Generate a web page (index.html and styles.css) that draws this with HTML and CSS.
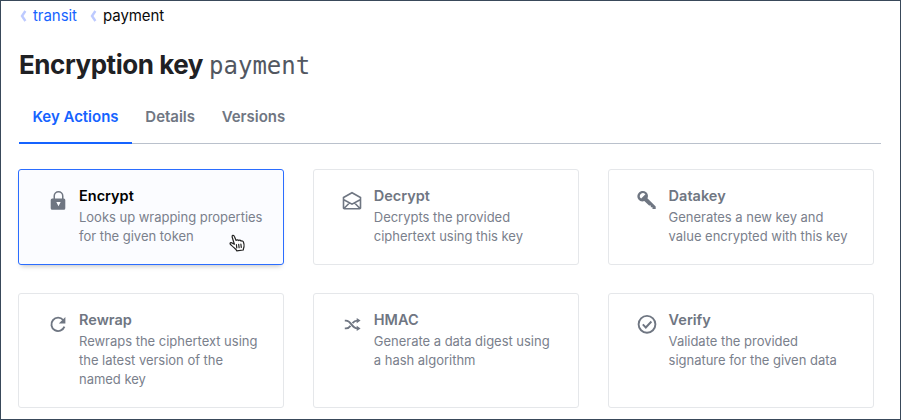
FILE: index.html
```html
<!DOCTYPE html>
<html lang="en">
<head>
<meta charset="utf-8">
<title>Encryption key payment</title>
<link rel="stylesheet" href="styles.css">
</head>
<body>
<main class="page">
  <nav class="breadcrumb">
    <svg class="chevron" viewBox="0 0 8 12"><path d="M6.400 1 3 6l3.400 5"/></svg>
    <a class="crumb-link">transit</a>
    <svg class="chevron" viewBox="0 0 8 12"><path d="M6.400 1 3 6l3.400 5"/></svg>
    <span class="crumb-current">payment</span>
  </nav>
  <h1 class="title"><span>Encryption key</span><code class="key-name">payment</code></h1>
  <nav class="tabs">
    <a class="tab active">Key Actions</a>
    <a class="tab">Details</a>
    <a class="tab">Versions</a>
  </nav>
  <section class="cards">
    <article class="card selected">
      <svg class="icon solid" viewBox="0 0 20 22"><path fill-rule="evenodd" d="M4 8V5.500a5 5 0 0 1 10 0V8h.3a1.500 1.500 0 0 1 1.500 1.500v8.200a1.500 1.500 0 0 1-1.500 1.500H2.700a1.500 1.500 0 0 1-1.500-1.500V9.500A1.500 1.500 0 0 1 2.700 8zM5.500 8h7V5.500a3.500 3.500 0 0 0-7 0zM6.800 11.500h4.400L9 15.800z" transform="translate(2.500 0.500)"/></svg>
      <div><h2>Encrypt</h2><p>Looks up wrapping properties<br>for the given token</p></div>
      <svg class="cursor" viewBox="0 0 17 18"><path d="M5.400 10.200 3.200 3.300C2.600 1.300 4.600.5 5.300 2.300l1.800 4.100c.8-.9 2-.8 2.500.2.900-.7 2-.5 2.400.5.900-.5 2-.1 2.400.9.500 1.300.9 3 .6 4.700-.2 1.300-.8 1.900-.7 3.300l-6.600.8c-.4-1.500-1.900-2.100-3.300-3.600C3.100 11.700.9 10.500 1 9.500c.2-1.200 1.700-1.100 2.700-.1zM7.400 10.700l.4 3.200M9.700 10.400l.4 3.300M11.900 10.200l.4 3.200"/></svg>
    </article>
    <article class="card">
      <svg class="icon line" viewBox="0 0 20 22"><path d="M1.500 7.500 10 2.700l8.500 4.800v10.400a.8.800 0 0 1-.8.800H2.300a.8.800 0 0 1-.8-.8zM1.800 9.800 10 14.200l8.200-4.400M2.200 18.200l5.200-5.200M17.800 18.200l-5.200-5.200"/></svg>
      <div><h2>Decrypt</h2><p>Decrypts the provided<br>ciphertext using this key</p></div>
    </article>
    <article class="card">
      <svg class="icon solid" viewBox="0 0 20 22"><path fill-rule="evenodd" d="M2.300 2.300C4.200.6 7.200.4 9.200 2.200c1.900 1.700 2.200 4 1.200 6.100l8.300 8.100v2.500h-3.200v-1.600h-1.700v-1.800h-1.700l-4.800-4.600C5.400 11.900 3 11.300 1.500 9.500-.3 7.400.1 4.300 2.300 2.300zM3.800 4C2.600 5.100 2.400 6.800 3.500 8l.7.600 4.200-4.300-.6-.6C6.700 2.700 5 2.800 3.800 4z"/></svg>
      <div><h2>Datakey</h2><p>Generates a new key and<br>value encrypted with this key</p></div>
    </article>
    <article class="card">
      <svg class="icon line bold" viewBox="0 0 20 22"><path d="M17.400 12.700a6.700 6.700 0 1 1-1.200-6.700"/><path class="fill" d="M18.400 2.900v6.600h-6.600z"/></svg>
      <div><h2>Rewrap</h2><p>Rewraps the ciphertext using<br>the latest version of the<br>named key</p></div>
    </article>
    <article class="card">
      <svg class="icon line bold" viewBox="0 0 20 22"><path d="M2.800 6.600h1.200c5.300 0 5.600 7.800 11.300 7.800h.7M2.800 14.400h1.200c2.100 0 3.400-1.200 4.500-2.600M10.500 9.100c1.200-1.500 2.600-2.500 4.800-2.500h.7"/><path class="fill" d="m14.700 3.900 3.900 2.700-3.900 2.700zM14.700 11.700l3.900 2.700-3.900 2.700z"/></svg>
      <div><h2>HMAC</h2><p>Generate a data digest using<br>a hash algorithm</p></div>
    </article>
    <article class="card">
      <svg class="icon line bold" viewBox="0 0 20 22"><circle cx="10" cy="10.300" r="8.400"/><path d="m5.800 10.400 3 3.100 5.600-6"/></svg>
      <div><h2>Verify</h2><p>Validate the provided<br>signature for the given data</p></div>
    </article>
  </section>
</main>
</body>
</html>
```
FILE: styles.css
```css
* { box-sizing: border-box; }
body { margin: 0; background: #fff; font-family: Inter, "Liberation Sans", sans-serif; }
.page {
  width: 901px;
  height: 420px;
  overflow: hidden;
  border: 1px solid #39495a;
  padding: 5px 19px 0 17px;
}
.breadcrumb { display: flex; align-items: center; height: 20px; margin-left: 1px; font-size: 15px; letter-spacing: -0.05px; line-height: 20px; }
.chevron { width: 8px; height: 12px; margin-right: 6px; fill: none; stroke: #bdcaff; stroke-width: 2.400; }
.crumb-link { color: #1563ff; margin-right: 12px; }
.crumb-current { color: #0a0a0a; }
.title {
  display: flex;
  align-items: baseline;
  margin: 21px 0 0 1px;
  height: 36px;
  line-height: 36px;
  font-size: 26px;
  font-weight: 650;
  letter-spacing: -0.450px;
  color: #1f2124;
}
.key-name { margin-left: 6px; font: 400 24px "DejaVu Sans Mono", monospace; letter-spacing: 0; color: #525761; }
.tabs { display: flex; margin: 13px 0 0 1px; height: 48px; border-bottom: 1px solid #bac1cc; }
.tab { height: 48px; padding: 11px 13.400px 0; line-height: 20px; font-size: 15px; letter-spacing: -0.02px; font-weight: 600; color: #6f7682; }
.tab.active { color: #1563ff; border-bottom: 2px solid #1563ff; }
.cards { display: grid; grid-template-columns: repeat(3, 266px); grid-template-rows: 96px 115px; column-gap: 28.800px; row-gap: 28px; margin-top: 25px; }
.card { position: relative; display: flex; padding: 16px 0 0 28px; border: 1px solid #e5e7ea; border-radius: 3px; color: #6f7682; }
.card.selected { border-color: #2b6dff; background: #fbfcff; box-shadow: 0 4px 5px -3px rgba(0, 0, 0, .25); }
.card h2 { margin: 0; font-size: 14.500px; line-height: 19px; font-weight: 600; }
.card.selected h2 { color: #000; }
.card p { margin: 3px 0 0; font-size: 13px; letter-spacing: -0.020px; line-height: 19px; white-space: nowrap; color: #7a808c; }
.icon { width: 20px; height: 22px; margin: 4px 12px 0 0; flex: none; }
.solid { fill: currentColor; }
.line { fill: none; stroke: currentColor; stroke-width: 1.600; }
.bold { stroke-width: 1.900; }
.fill { fill: currentColor; stroke: none; }
.cursor { position: absolute; left: 210px; top: 64px; width: 17px; height: 18px; fill: #fff; stroke: #222; stroke-width: 1.200; stroke-linejoin: round; stroke-linecap: round; }
```
